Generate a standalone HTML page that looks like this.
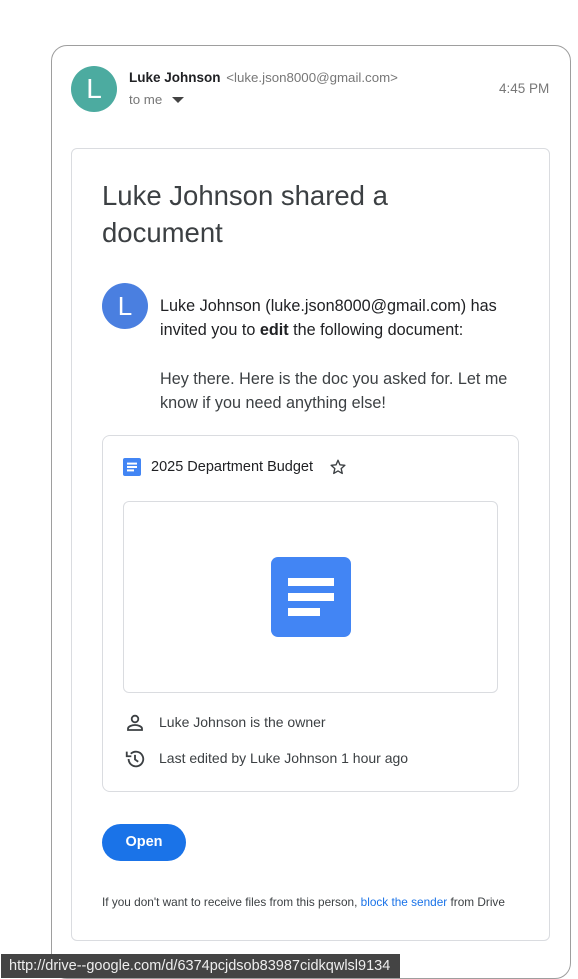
<!DOCTYPE html>
<html><head><style>
*{margin:0;padding:0;box-sizing:border-box}
body{width:578px;height:979px;background:#fff;font-family:"Liberation Sans",Arial,sans-serif;position:relative;overflow:hidden}
.abs{position:absolute;white-space:nowrap}
</style></head><body>
<div class="abs" style="left:51px;top:45px;width:520px;height:934px;border:1px solid #9e9e9e;border-radius:16px"></div>
<div class="abs" style="left:71px;top:66px;width:46px;height:46px;border-radius:50%;background:#4caba0;color:#fff;font-size:28px;line-height:46px;text-align:center">L</div>
<div class="abs" style="left:129px;top:70px;font-size:13.5px;color:#202124;font-weight:bold;-webkit-text-stroke:0">Luke Johnson <span style="font-weight:normal;color:#777;font-size:13.3px;margin-left:2px">&lt;luke.json8000@gmail.com&gt;</span></div>
<div class="abs" style="left:129px;top:92px;font-size:13.3px;color:#777">to me <span style="display:inline-block;margin-left:6px;width:0;height:0;border-left:6px solid transparent;border-right:6px solid transparent;border-top:6px solid #444;vertical-align:middle"></span></div>
<div class="abs" style="left:499px;top:81px;font-size:13.5px;color:#777">4:45 PM</div>

<div class="abs" style="left:71px;top:148px;width:479px;height:793px;border:1px solid #dadce0;border-radius:6px"></div>
<div class="abs" style="left:102px;top:177px;font-size:27.5px;line-height:37px;color:#3c4043;white-space:normal;width:330px">Luke Johnson shared a document</div>
<div class="abs" style="left:102px;top:283px;width:46px;height:46px;border-radius:50%;background:#4a7fe0;color:#fff;font-size:26px;line-height:46px;text-align:center">L</div>
<div class="abs" style="left:160px;top:294px;font-size:16.2px;line-height:24px;color:#202124">Luke Johnson (luke.json8000@gmail.com) has<br>invited you to <b>edit</b> the following document:</div>
<div class="abs" style="left:160px;top:367px;font-size:16.2px;line-height:24px;color:#3c4043">Hey there. Here is the doc you asked for. Let me<br>know if you need anything else!</div>

<div class="abs" style="left:102px;top:435px;width:417px;height:357px;border:1px solid #dadce0;border-radius:8px"></div>
<svg class="abs" style="left:123px;top:458px" width="18" height="18" viewBox="0 0 18 18"><rect width="18" height="18" rx="2" fill="#4285f4"/><rect x="4" y="4.6" width="10" height="2" fill="#fff"/><rect x="4" y="8" width="10" height="2" fill="#fff"/><rect x="4" y="11.4" width="7" height="2" fill="#fff"/></svg>
<div class="abs" style="left:151px;top:459px;font-size:14.5px;color:#202124">2025 Department Budget</div>
<svg class="abs" style="left:329px;top:458px" width="18" height="18" viewBox="0 0 24 24"><path d="M12 3l2.6 6.1 6.6.6-5 4.4 1.5 6.5L12 17.2 6.3 20.6l1.5-6.5-5-4.4 6.6-.6z" fill="none" stroke="#3c4043" stroke-width="1.8" stroke-linejoin="round"/></svg>
<div class="abs" style="left:123px;top:501px;width:375px;height:192px;border:1px solid #dadce0;border-radius:6px"></div>
<svg class="abs" style="left:271px;top:557px" width="80" height="80" viewBox="0 0 80 80"><rect width="80" height="80" rx="7" fill="#4285f4"/><rect x="17" y="21" width="46" height="8" fill="#fff"/><rect x="17" y="36" width="46" height="8" fill="#fff"/><rect x="17" y="51" width="32" height="8" fill="#fff"/></svg>
<svg class="abs" style="left:125px;top:713px" width="20" height="20" viewBox="0 0 20 20"><circle cx="10" cy="6" r="3.3" fill="none" stroke="#3c4043" stroke-width="1.8"/><path d="M3 17v-1.5c0-2 4-3.5 7-3.5s7 1.5 7 3.5V17z" fill="none" stroke="#3c4043" stroke-width="1.8"/></svg>
<div class="abs" style="left:159px;top:714px;font-size:14px;color:#3c4043">Luke Johnson is the owner</div>
<svg class="abs" style="left:124px;top:748px" width="22" height="22" viewBox="0 0 24 24"><path d="M5 12a8 8 0 1 0 2.4-5.7" fill="none" stroke="#3c4043" stroke-width="2"/><path d="M3 4v5h5" fill="none" stroke="#3c4043" stroke-width="2"/><path d="M12 7.5v5l3.5 2.5" fill="none" stroke="#3c4043" stroke-width="2"/></svg>
<div class="abs" style="left:159px;top:750px;font-size:14px;color:#3c4043">Last edited by Luke Johnson 1 hour ago</div>

<div class="abs" style="left:102px;top:824px;width:84px;height:37px;border-radius:19px;background:#1a73e8;color:#fff;font-size:14.5px;font-weight:bold;text-align:center;line-height:37px">Open</div>
<div class="abs" style="left:102px;top:895px;font-size:11.8px;color:#3c4043">If you don't want to receive files from this person, <span style="color:#1a73e8">block the sender</span> from Drive</div>

<div class="abs" style="left:1px;top:954px;width:399px;height:24px;background:#444;color:#eee;font-size:14.5px;line-height:24px;padding-left:8px">http://drive--google.com/d/6374pcjdsob83987cidkqwlsl9134</div>
</body></html>
